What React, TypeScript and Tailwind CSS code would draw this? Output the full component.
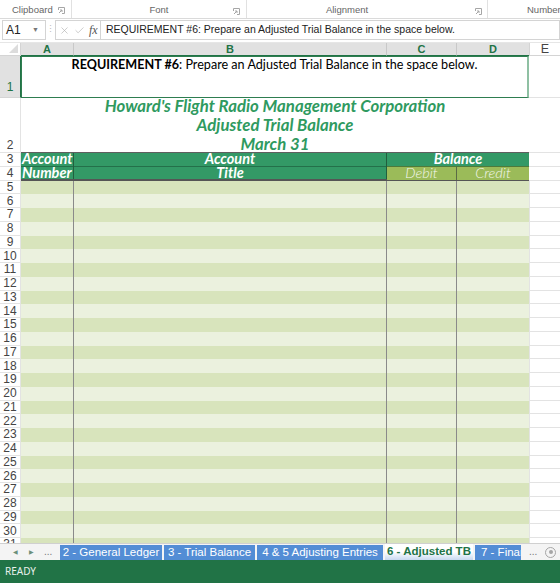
import { Check, X } from 'lucide-react';

// worksheet body rows after the header block
const bodyRows = Array.from({ length: 27 }, (_, i) => i + 5);

const tabs = [
  { name: '2 - General Ledger', w: 'w-[102px]' },
  { name: '3 - Trial Balance', w: 'w-[91px]' },
  { name: '4 & 5 Adjusting Entries', w: 'w-[126px]' },
];

const Launcher = () => (
  <svg width="7" height="7" viewBox="0 0 7 7" className="text-[#a6a6a6]">
    <path d="M0.5 3V0.5H6.5V6.5H4" fill="none" stroke="currentColor" strokeWidth="1" />
    <path d="M1 6L4 3M2 3H4V5" fill="none" stroke="currentColor" strokeWidth="1" />
  </svg>
);

const RowHead = ({ n, tall }: { n: number; tall?: boolean }) => (
  <div
    className={`w-[21px] shrink-0 ${tall ? 'h-[55px] items-end pb-[1px]' : 'h-[13.75px] items-center'} flex justify-center border-b border-r border-[#e3e3e3] bg-white text-[12px] leading-none text-[#444] font-['Liberation_Sans',sans-serif]`}
  >
    {n}
  </div>
);

const BodyRow = ({ n }: { n: number }) => {
  const stripe = n % 2 === 1 ? 'bg-[#d8e4bc]' : 'bg-[#ebf1de]';
  return (
    <div className="flex h-[13.75px] shrink-0">
      <RowHead n={n} />
      <div className={`w-[53px] border-r border-[#8a8a8a] ${stripe}`} />
      <div className={`w-[313px] border-r border-[#8a8a8a] ${stripe}`} />
      <div className={`w-[70px] border-r border-[#8a8a8a] ${stripe}`} />
      <div className={`w-[72px] ${stripe}`} />
      <div className="flex-1 border-b border-l border-[#e3e3e3]" />
    </div>
  );
};

export default function App() {
  return (
    <div className="w-[560px] h-[583px] flex flex-col overflow-hidden bg-white font-['Liberation_Sans',sans-serif]">
      {/* ribbon group captions */}
      <div className="flex h-[19px] shrink-0 border-b border-[#dadada] text-[9.5px] leading-[12px] text-[#666]">
        <div className="w-[72px] flex items-end justify-between pb-[2px] pl-[12px] pr-[6px] border-r border-[#e1e1e1]">
          <span>Clipboard</span>
          <span className="pb-[2px]"><Launcher /></span>
        </div>
        <div className="w-[175px] relative flex items-end pb-[2px] justify-center border-r border-[#e1e1e1]">
          <span>Font</span>
          <span className="absolute right-[6px] top-[8px]"><Launcher /></span>
        </div>
        <div className="w-[241px] relative flex items-end pb-[2px] justify-center border-r border-[#e1e1e1]">
          <span className="pr-[40px]">Alignment</span>
          <span className="absolute right-[5px] top-[8px]"><Launcher /></span>
        </div>
        <div className="flex-1 flex items-end pb-[2px] pl-[39px] whitespace-nowrap overflow-hidden">Number</div>
      </div>

      {/* name box + formula bar */}
      <div className="flex h-[24px] shrink-0 items-start pt-[1px] border-b border-[#e6e6e6]">
        <div className="w-[44px] h-[20px] ml-[2px] flex items-center justify-between pl-[3px] pr-[6px] border border-[#d4d4d4] text-[12px] text-[#222]">
          <span>A1</span>
          <span className="text-[7px] text-[#777]">▼</span>
        </div>
        <div className="w-[9px] h-[20px] flex items-center justify-center text-[9px] text-[#bbb]">⋮</div>
        <div className="w-[45px] h-[20px] flex items-center gap-[4px] pl-[3px] border-l border-y border-[#d4d4d4] text-[#b0b0b0]">
          <X size={11} strokeWidth={1.4} />
          <Check size={11} strokeWidth={1.4} />
          <span className="italic text-[12px] text-[#555] font-['Liberation_Serif',serif]">fx</span>
        </div>
        <div className="flex-1 h-[20px] flex items-center pl-[5px] border border-[#d4d4d4] text-[10.5px] text-[#222] whitespace-nowrap overflow-hidden">
          REQUIREMENT #6: Prepare an Adjusted Trial Balance in the space below.
        </div>
      </div>

      {/* column letters */}
      <div className="flex h-[13px] shrink-0 text-[11px] leading-[12px]">
        <div className="w-[21px] relative border-r border-b border-[#d4d4d4] bg-white">
          <div className="absolute right-[2px] bottom-[2px] w-0 h-0 border-l-[9px] border-l-transparent border-b-[9px] border-b-[#dcdcdc]" />
        </div>
        <div className="w-[53px] flex justify-center bg-[#e1e1e1] border-r border-[#c8c8c8] border-b border-b-[#217346] font-bold text-[#217346]">A</div>
        <div className="w-[313px] flex justify-center bg-[#e1e1e1] border-r border-[#c8c8c8] border-b border-b-[#217346] font-bold text-[#217346]">B</div>
        <div className="w-[70px] flex justify-center bg-[#e1e1e1] border-r border-[#c8c8c8] border-b border-b-[#217346] font-bold text-[#217346]">C</div>
        <div className="w-[72px] flex justify-center bg-[#e1e1e1] border-b border-b-[#217346] font-bold text-[#217346]">D</div>
        <div className="flex-1 flex justify-center border-l border-b border-[#d4d4d4] text-[12.5px] text-[#444]">E</div>
      </div>

      {/* worksheet */}
      <div className="flex-1 min-h-0 overflow-hidden flex flex-col font-['Lato',sans-serif]">
        {/* row 1: requirement note */}
        <div className="flex h-[42px] shrink-0">
          <div className="w-[21px] shrink-0 flex items-end justify-center pb-[1px] bg-[#e1e1e1] border-r border-[#217346] border-b border-b-[#d4d4d4] text-[12px] text-[#217346] font-['Liberation_Sans',sans-serif]">
            1
          </div>
          <div className="w-[508px] border border-[#2e7d50] border-r-2 border-r-[#8fc0a3] flex justify-center text-[12.6px] leading-[16px] text-black whitespace-nowrap">
            <span>
              <span className="font-bold">REQUIREMENT #6</span>: Prepare an Adjusted Trial Balance in the space below.
            </span>
          </div>
          <div className="flex-1 border-b border-[#e3e3e3]" />
        </div>

        {/* row 2: report heading */}
        <div className="flex h-[55px] shrink-0">
          <RowHead n={2} tall />
          <div className="w-[508px] border-b border-[#5f5f5f]">
            <div className="-mt-[2px] flex flex-col items-center text-[16.8px] leading-[19px] font-bold italic text-[#2f9a5f] whitespace-nowrap">
              <span>Howard's Flight Radio Management Corporation</span>
              <span>Adjusted Trial Balance</span>
              <span>March 31</span>
            </div>
          </div>
          <div className="flex-1 border-b border-[#e3e3e3]" />
        </div>

        {/* rows 3-4: column titles */}
        <div className="flex h-[27.5px] shrink-0">
          <div className="w-[21px] shrink-0 flex flex-col">
            <RowHead n={3} />
            <RowHead n={4} />
          </div>
          <div className="w-[508px] flex border-b-2 border-[#555] text-[14.5px] leading-[12.75px] text-white">
            <div className="w-[53px] flex flex-col border-r border-[#215f3d] bg-[#339966] font-bold italic whitespace-nowrap">
              <div className="h-[13.75px] pl-[1px] border-b border-[#24704a]">Account</div>
              <div className="flex-1 pl-[1px]">Number</div>
            </div>
            <div className="w-[313px] flex flex-col border-r border-[#215f3d] bg-[#339966] font-bold italic text-center">
              <div className="h-[13.75px] border-b border-[#24704a]">Account</div>
              <div className="flex-1">Title</div>
            </div>
            <div className="w-[142px] flex flex-col">
              <div className="h-[13.75px] bg-[#339966] border-b border-[#4f7a3a] font-bold italic text-center">Balance</div>
              <div className="flex-1 flex bg-[#9bbb59] italic font-light text-[#f4f7ee]">
                <div className="w-[70px] border-r border-[#5b6b45] text-center">Debit</div>
                <div className="flex-1 text-center">Credit</div>
              </div>
            </div>
          </div>
          <div className="flex-1 flex flex-col">
            <div className="h-[13.75px] border-b border-[#e3e3e3]" />
            <div className="flex-1 border-b border-[#e3e3e3]" />
          </div>
        </div>

        {bodyRows.map((n) => (
          <BodyRow key={n} n={n} />
        ))}
      </div>

      {/* sheet tabs */}
      <div className="flex h-[17px] shrink-0 items-end border-t border-[#d0d0d0] bg-[#f4f4f4] text-[11.5px]">
        <div className="w-[60px] h-full flex items-center text-[#6b8f7a]">
          <span className="ml-[13px] text-[6px]">◀</span>
          <span className="ml-[11px] text-[6px]">▶</span>
          <span className="ml-[10px] text-[10px] text-[#777] leading-[8px]">...</span>
        </div>
        <div className="flex items-end gap-[2px] h-[15px] self-start mt-[1px]">
          {tabs.map((t) => (
            <div key={t.name} className={`${t.w} h-full flex items-center justify-center bg-[#538dd5] text-white whitespace-nowrap`}>
              {t.name}
            </div>
          ))}
          <div className="w-[88px] h-[16px] flex items-center justify-center bg-gradient-to-b from-white via-white to-[#c7d8f0] font-bold text-[#217346] whitespace-nowrap">
            6 - Adjusted TB
          </div>
          <div className="w-[46px] h-full flex items-center pl-[6px] bg-[#538dd5] text-white whitespace-nowrap overflow-hidden">
            7 - Financial
          </div>
        </div>
        <div className="flex-1 h-full flex items-center">
          <span className="ml-[8px] text-[10px] text-[#777] leading-[8px]">...</span>
          <span className="ml-[8px] w-[11px] h-[11px] rounded-full border border-[#a6a6a6] flex items-center justify-center">
            <span className="w-[4px] h-[4px] rounded-full bg-[#a6a6a6]" />
          </span>
        </div>
      </div>

      {/* status bar */}
      <div className="h-[23px] shrink-0 flex items-center pl-[5px] bg-[#217346] text-[10px] text-[#e8f1ec] font-['Noto_Sans',sans-serif]">
        READY
      </div>
    </div>
  );
}
